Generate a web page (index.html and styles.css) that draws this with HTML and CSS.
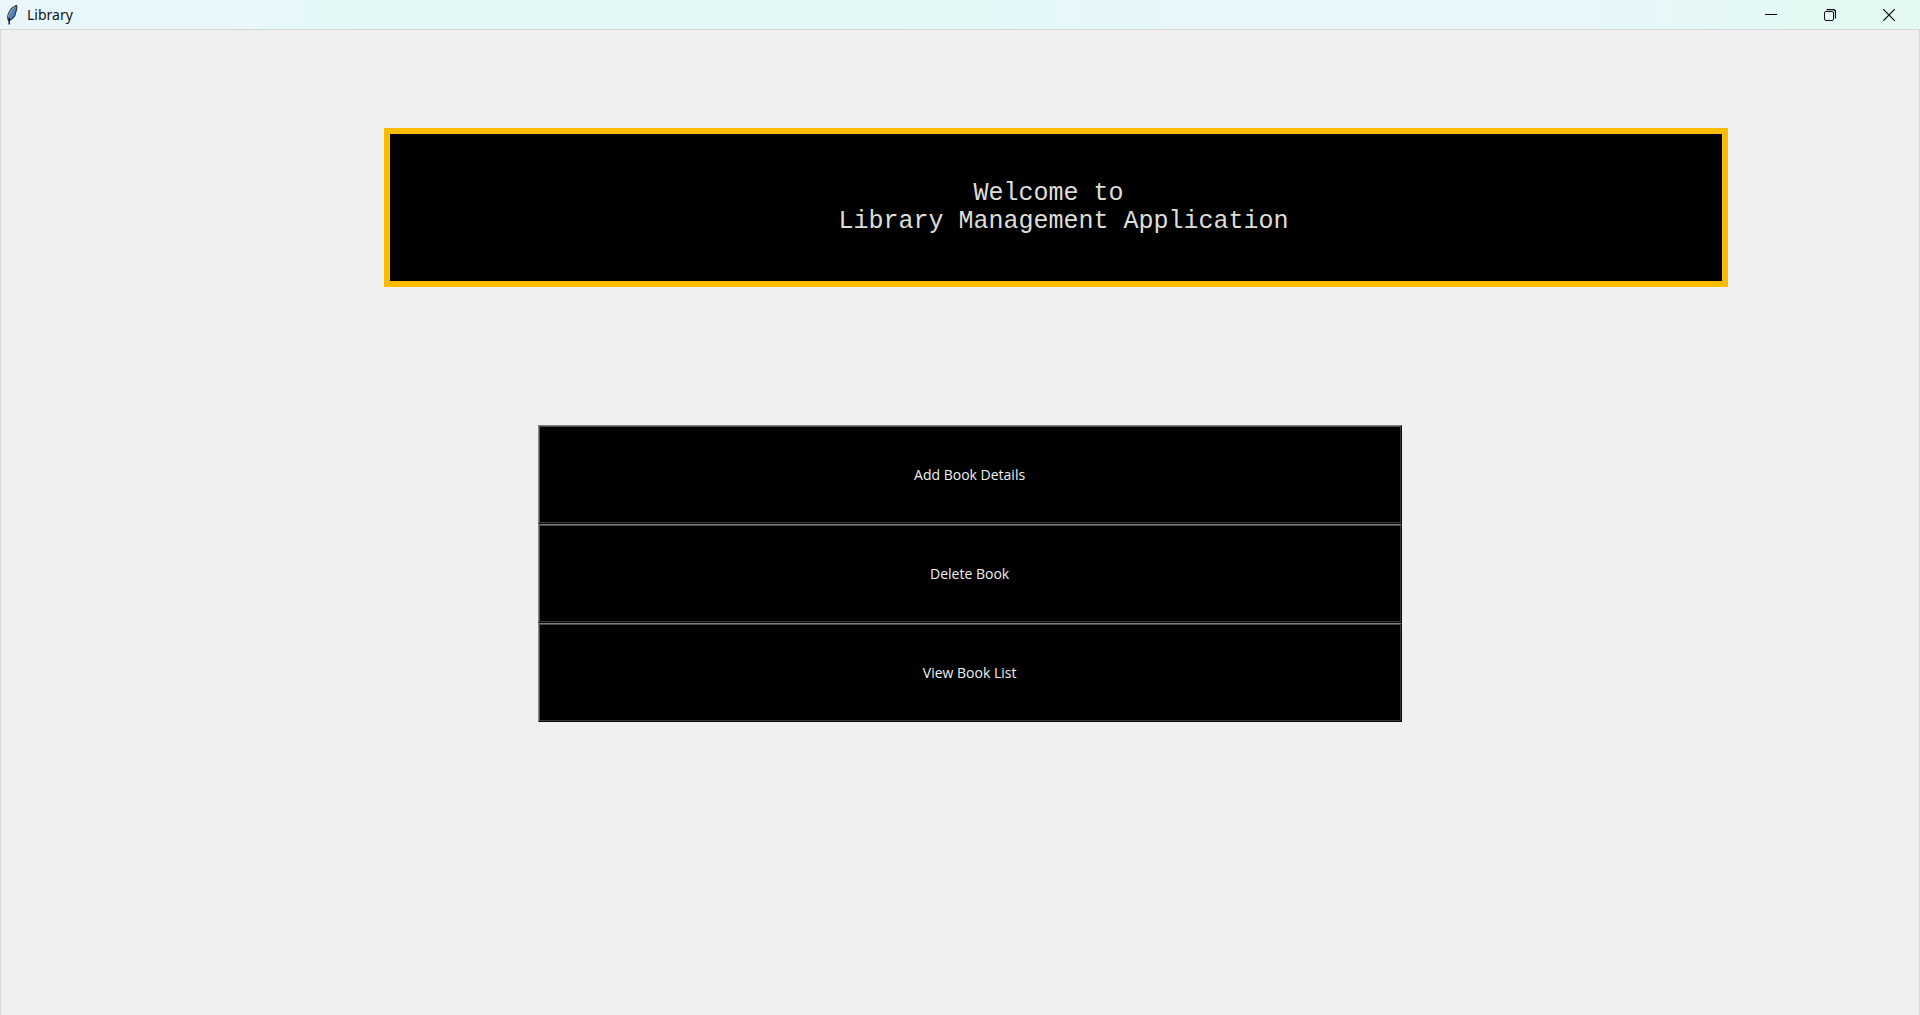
FILE: index.html
```
<!DOCTYPE html>
<html lang="en">
<head>
<meta charset="utf-8">
<title>Library</title>
<link rel="stylesheet" href="styles.css">
</head>
<body>
<header class="titlebar">
  <svg class="app-icon" width="12" height="20" viewBox="0 0 12 20" aria-hidden="true">
    <path d="M10.500 0.500C7 1.500 4 4.500 2.500 8.500C1.500 11.500 1.500 14 2.500 15.500L4.500 15C8 13 9.500 10 9.800 7C10.800 4.500 11 2.500 10.500 0.500Z" fill="#4a82c4" stroke="#35393f" stroke-width="1.200"/>
    <path d="M9 2C6 4 3.500 7.500 2.500 12" fill="none" stroke="#8d969e" stroke-width="1.500"/>
    <path d="M3.200 13V19.500" fill="none" stroke="#111" stroke-width="1.400"/>
  </svg>
  <span class="title">Library</span>
  <div class="controls">
    <button class="control" type="button" aria-label="Minimize">
      <svg width="12" height="12" viewBox="0 0 12 12"><path d="M0 5.500H12" stroke="#000"/></svg>
    </button>
    <button class="control" type="button" aria-label="Restore">
      <svg width="12" height="12" viewBox="0 0 12 12" fill="none" stroke="#111"><rect x="0.500" y="2.500" width="9" height="9" rx="1.500"/><path d="M2.500 0.500H9Q11.500 0.500 11.500 3V9.500" stroke-width="1.300"/></svg>
    </button>
    <button class="control" type="button" aria-label="Close">
      <svg width="12" height="12" viewBox="0 0 12 12"><path d="M0.300 0.300L11.700 11.700M11.700 0.300L0.300 11.700" stroke="#000" stroke-width="1.200"/></svg>
    </button>
  </div>
</header>
<main class="window">
  <!-- Spaces around the line break are part of the label text -->
  <h1 class="banner">Welcome to 
 Library Management Application</h1>
  <nav class="menu" aria-label="Library actions">
    <button class="action" type="button">Add Book Details</button>
    <button class="action" type="button">Delete Book</button>
    <button class="action" type="button">View Book List</button>
  </nav>
</main>
</body>
</html>
```
FILE: styles.css
```
* {
  box-sizing: border-box;
}

body {
  display: flex;
  flex-direction: column;
  min-height: 100vh;
  margin: 0;
  background: #f0f0f0;
  font-family: "Open Sans", "Noto Sans", sans-serif;
}

.titlebar {
  display: flex;
  align-items: center;
  height: 29px;
  padding: 0 2px 0 6px;
  background: linear-gradient(90deg, #e8f7fb 0%, #e8f7fb 12%, #e4f9f7 19%, #e4f9f7 46%, #e7f7fb 62%, #e7f7fb 82%, #e4f9f4 94%, #e4f9f4 100%);
}

.app-icon {
  margin-right: 9px;
}

.title {
  color: #111;
  font-family: "Noto Sans", sans-serif;
  font-size: 14px;
  line-height: 20px;
}

.controls {
  display: flex;
  margin-left: auto;
}

.control {
  display: flex;
  align-items: center;
  justify-content: center;
  width: 59px;
  height: 28px;
  padding: 0;
  border: 0;
  background: transparent;
}

.window {
  flex: 1;
  padding: 98px 0;
  border-top: 1px solid #d5d8d8;
  box-shadow: inset 1px 0 #d5d8d8, inset -1px 0 #d5d8d8;
}

.banner {
  display: flex;
  align-items: center;
  justify-content: center;
  width: 70%;
  height: 159px;
  margin: 0 0 138px 20%;
  border: 6px solid #ffbb00;
  background: #000;
  color: #deded8;
  font-family: "Courier New", "Liberation Mono", monospace;
  font-size: 25px;
  font-weight: 400;
  line-height: 28px;
  text-align: center;
  white-space: pre;
}

.menu {
  display: flex;
  flex-direction: column;
  width: 45%;
  margin-left: 28%;
}

.action {
  height: 99px;
  padding: 0;
  border: 1px solid;
  border-color: #7c7c7c #0a0a0a #0a0a0a #8c8c8c;
  box-shadow: inset 1px 1px #4a4a4a, inset -1px -1px #3a3a3a;
  background: #000;
  color: #f0f0f0;
  font-family: inherit;
  font-size: 14px;
  line-height: 20px;
}
```
